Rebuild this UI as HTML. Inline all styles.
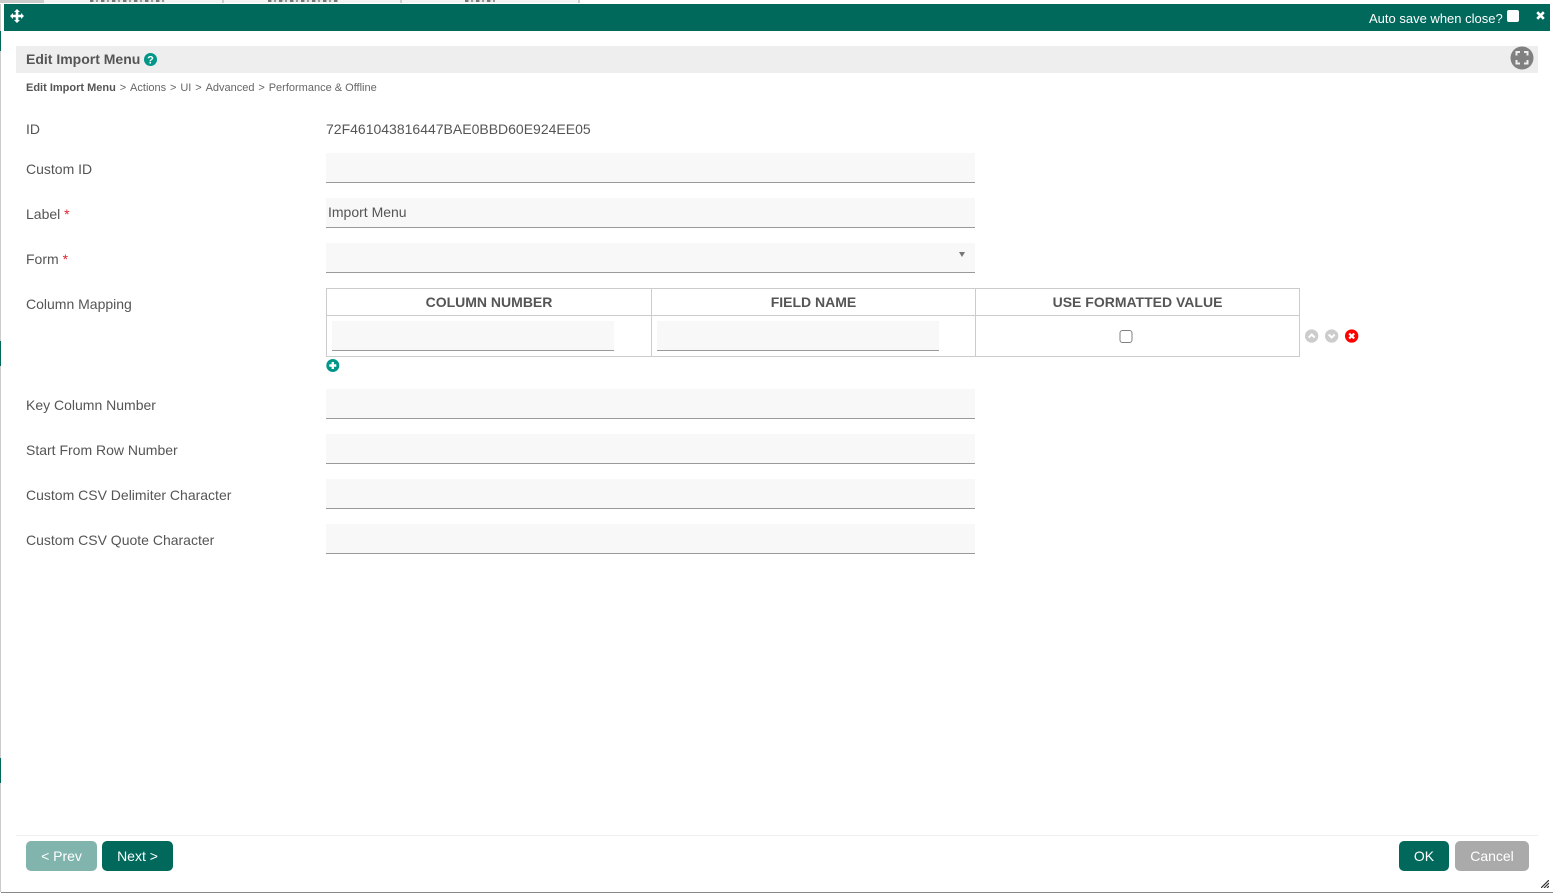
<!DOCTYPE html>
<html><head><meta charset="utf-8"><title>Edit Import Menu</title>
<style>
*{box-sizing:border-box}
html,body{margin:0;padding:0;width:1553px;height:893px;overflow:hidden;background:#fff;font-family:"Liberation Sans",Arial,sans-serif;color:#555;font-size:14px}
.a{position:absolute}
.lbl{position:absolute;left:26px;font-size:14px;line-height:16px;color:#555;white-space:nowrap}
.req{color:#e0222e}
.inp{position:absolute;left:326px;width:649px;height:30px;background:#f8f8f8;border-bottom:1px solid #9a9a9a}
.th{position:absolute;top:289px;height:27px;font-weight:bold;font-size:14px;line-height:27px;text-align:center;color:#555}
.btn{position:absolute;top:841px;height:30px;border-radius:5px;color:#fff;font-size:14px;line-height:30px;text-align:center}
.frag{position:absolute;top:0;height:2px;background:repeating-linear-gradient(90deg,#777 0 3px,#bbb 3px 4px,#e8e8e8 4px 6px,#999 6px 8px,#e8e8e8 8px 11px)}
.bc{margin:0 3.900px}
</style></head><body>
<!-- background bits -->
<div class="a" style="left:0;top:0;width:44px;height:3px;background:#ccc"></div>
<div class="a" style="left:44px;top:0;width:535px;height:3px;background:#f4f4f4"></div>
<div class="a" style="left:222px;top:0;width:2px;height:3px;background:#ccc"></div>
<div class="a" style="left:400px;top:0;width:2px;height:3px;background:#ccc"></div>
<div class="a" style="left:578px;top:0;width:2px;height:3px;background:#ccc"></div>
<div class="frag" style="left:90px;width:75px"></div>
<div class="frag" style="left:268px;width:70px"></div>
<div class="frag" style="left:465px;width:30px"></div>
<div class="a" style="left:0;top:4px;width:1px;height:888px;background:#ccc"></div>
<div class="a" style="left:0;top:31px;width:1px;height:20px;background:#00695c"></div>
<div class="a" style="left:0;top:341px;width:1px;height:25px;background:#00695c"></div>
<div class="a" style="left:0;top:758px;width:1px;height:25px;background:#00695c"></div>
<div class="a" style="left:1px;top:892px;width:1552px;height:1px;background:#888"></div>

<!-- header bar -->
<div class="a" style="left:4px;top:4px;width:1546px;height:27px;background:#00695c"></div>
<svg class="a" style="left:10px;top:9px" width="14" height="14" viewBox="0 0 14 14"><path fill="#fff" d="M7 0l3 3H8.300v2.700H11V4l3 3-3 3V8.300H8.300V11H10l-3 3-3-3h1.700V8.300H3V10L0 7l3-3v1.700h2.700V3H4z"/></svg>
<div class="a" style="left:1369px;top:10px;font-size:13px;line-height:17px;color:#fff;white-space:nowrap">Auto save when close?</div>
<div class="a" style="left:1507px;top:10px;width:12px;height:12px;background:#fff;border-radius:2px"></div>
<svg class="a" style="left:1536px;top:11px" width="9" height="9" viewBox="0 0 9 9"><path d="M1.200 1.200l6.600 6.600M7.800 1.200L1.200 7.800" stroke="#fff" stroke-width="2.600"/></svg>

<!-- title -->
<div class="a" style="left:16px;top:46px;width:1522px;height:27px;background:#eee"></div>
<div class="a" style="left:26px;top:51px;font-size:14px;line-height:17px;font-weight:bold;color:#555;white-space:nowrap">Edit Import Menu</div>
<svg class="a" style="left:144px;top:53px" width="13" height="13" viewBox="0 0 13 13"><circle cx="6.500" cy="6.500" r="6.500" fill="#009688"/><text x="6.500" y="10.500" text-anchor="middle" font-family="Liberation Sans" font-weight="bold" font-size="11" fill="#fff">?</text></svg>
<svg class="a" style="left:1510px;top:46px" width="24" height="24" viewBox="0 0 24 24"><circle cx="12" cy="12" r="11.500" fill="#808080"/><path d="M6.500 9.500V6h3.500M14 6h3.500v3.500M17.500 14v3.500H14M10 17.500H6.500V14" fill="none" stroke="#eee" stroke-width="2"/></svg>

<!-- breadcrumb -->
<div class="a" style="left:26px;top:82px;font-size:11px;line-height:13px;color:#666;white-space:nowrap"><b style="color:#555">Edit Import Menu</b><span class="bc">&gt;</span>Actions<span class="bc">&gt;</span>UI<span class="bc">&gt;</span>Advanced<span class="bc">&gt;</span>Performance &amp; Offline</div>

<!-- form -->
<div class="lbl" style="top:121px">ID</div>
<div class="a" style="left:326px;top:121px;line-height:16px;color:#555;white-space:nowrap">72F461043816447BAE0BBD60E924EE05</div>

<div class="lbl" style="top:161px">Custom ID</div>
<div class="inp" style="top:153px"></div>

<div class="lbl" style="top:206px">Label <span class="req">*</span></div>
<div class="inp" style="top:198px;padding-left:2px;line-height:28px">Import Menu</div>

<div class="lbl" style="top:251px">Form <span class="req">*</span></div>
<div class="inp" style="top:243px"></div>
<div class="a" style="left:959px;top:252px;width:0;height:0;border-left:3.500px solid transparent;border-right:3.500px solid transparent;border-top:5px solid #777"></div>

<div class="lbl" style="top:296px">Column Mapping</div>
<!-- table -->
<div class="a" style="left:326px;top:288px;width:974px;height:69px;border:1px solid #ccc"></div>
<div class="a" style="left:327px;top:315px;width:972px;height:1px;background:#ccc"></div>
<div class="a" style="left:651px;top:289px;width:1px;height:67px;background:#ccc"></div>
<div class="a" style="left:975px;top:289px;width:1px;height:67px;background:#ccc"></div>
<div class="th" style="left:327px;width:324px">COLUMN NUMBER</div>
<div class="th" style="left:652px;width:323px">FIELD NAME</div>
<div class="th" style="left:976px;width:323px">USE FORMATTED VALUE</div>
<div class="a" style="left:332px;top:321px;width:282px;height:30px;background:#f8f8f8;border-bottom:1px solid #9a9a9a"></div>
<div class="a" style="left:657px;top:321px;width:282px;height:30px;background:#f8f8f8;border-bottom:1px solid #9a9a9a"></div>
<svg class="a" style="left:1119px;top:330px" width="14" height="14" viewBox="0 0 14 14"><rect x="1" y=".5" width="12" height="12" rx="2.500" fill="#fff" stroke="#808080" stroke-width="1"/></svg>
<svg class="a" style="left:1305px;top:329px" width="14" height="14" viewBox="0 0 14 14"><circle cx="6.670" cy="7" r="6.670" fill="#ccc"/><path d="M3.700 8.500l3-3 3 3" fill="none" stroke="#fff" stroke-width="2"/></svg>
<svg class="a" style="left:1325px;top:329px" width="14" height="14" viewBox="0 0 14 14"><circle cx="6.670" cy="7" r="6.670" fill="#ccc"/><path d="M3.700 5.500l3 3 3-3" fill="none" stroke="#fff" stroke-width="2"/></svg>
<svg class="a" style="left:1345px;top:329px" width="14" height="14" viewBox="0 0 14 14"><circle cx="6.670" cy="7" r="6.670" fill="#f00"/><path d="M4.200 4.500l5 5M9.200 4.500l-5 5" stroke="#fff" stroke-width="2.200"/></svg>
<svg class="a" style="left:326px;top:358px" width="14" height="14" viewBox="0 0 14 14"><circle cx="6.800" cy="7.500" r="6.500" fill="#009688"/><path d="M6.800 4v7M3.300 7.500h7" stroke="#fff" stroke-width="2.400"/></svg>

<div class="lbl" style="top:397px">Key Column Number</div>
<div class="inp" style="top:389px"></div>
<div class="lbl" style="top:442px">Start From Row Number</div>
<div class="inp" style="top:434px"></div>
<div class="lbl" style="top:487px">Custom CSV Delimiter Character</div>
<div class="inp" style="top:479px"></div>
<div class="lbl" style="top:532px">Custom CSV Quote Character</div>
<div class="inp" style="top:524px"></div>

<!-- footer -->
<div class="a" style="left:16px;top:835px;width:1522px;height:1px;background:#eee"></div>
<div class="btn" style="left:26px;width:71px;background:#80b4ad">&lt; Prev</div>
<div class="btn" style="left:102px;width:71px;background:#00695c">Next &gt;</div>
<div class="btn" style="left:1399px;width:50px;background:#00695c">OK</div>
<div class="btn" style="left:1455px;width:74px;background:#aaa">Cancel</div>
<svg class="a" style="left:1541px;top:880px" width="8" height="8" viewBox="0 0 8 8"><path d="M0 8L8 0M3 8l5-5M6 8l2-2" stroke="#333" stroke-width="1.200"/></svg>
</body></html>
